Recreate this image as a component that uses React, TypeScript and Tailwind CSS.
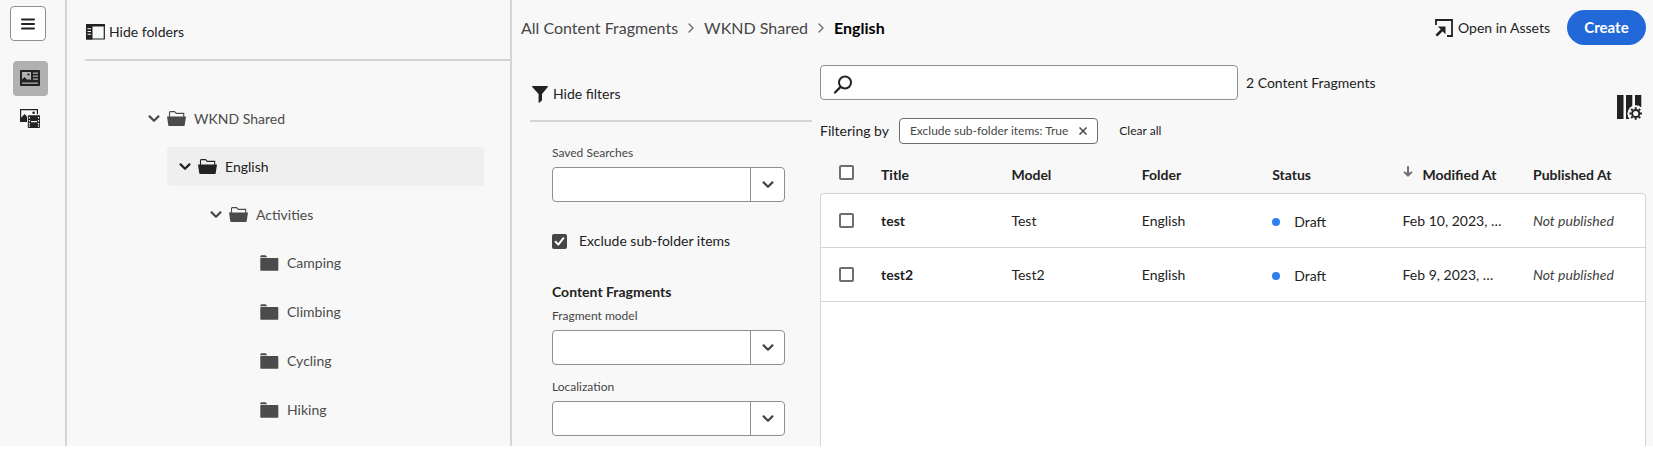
import type { ReactNode } from "react";

type IconProps = { className?: string };

function ChevronDown({ className = "" }: IconProps) {
  return (
    <svg className={className} width="12" height="8" viewBox="0 0 12 8" fill="none" aria-hidden="true">
      <path d="M1.6 1.4 6 5.800l4.400-4.400" stroke="currentColor" strokeWidth="2.200" strokeLinecap="round" strokeLinejoin="round" />
    </svg>
  );
}

function ChevronRight() {
  return (
    <svg className="text-[#6e6e6e]" width="6" height="10" viewBox="0 0 6 10" fill="none" aria-hidden="true">
      <path d="M1 1l4 4-4 4" stroke="currentColor" strokeWidth="1.400" strokeLinecap="round" strokeLinejoin="round" />
    </svg>
  );
}

function MenuIcon() {
  return (
    <svg width="14" height="12" viewBox="0 0 14 12" fill="none" aria-hidden="true">
      <path d="M1 1.500h12M1 6h12M1 10.500h12" stroke="currentColor" strokeWidth="2" strokeLinecap="round" />
    </svg>
  );
}

function FragmentIcon() {
  return (
    <svg width="20" height="16" viewBox="0 0 20 16" aria-hidden="true">
      <rect width="20" height="16" rx="0.800" fill="currentColor" />
      <path d="M2 2h9v9H2z" fill="#b1b1b1" />
      <rect x="7.400" y="3.600" width="2" height="2" rx="0.500" fill="currentColor" />
      <path d="M2 9.600 4.600 7l3 3 1.400-1 2 1.400V11H2z" fill="currentColor" />
      <path d="M13 2.600h5v1.200h-5zM13 5.600h5v1.200h-5zM13 8.600h5v1.200h-5zM2 12.600h16v1.200H2z" fill="#b1b1b1" />
    </svg>
  );
}

function AssetsIcon() {
  return (
    <svg width="20" height="19" viewBox="0 0 20 19" aria-hidden="true">
      <path d="M.600 12.500V.700h16.800v4.600" fill="none" stroke="currentColor" strokeWidth="1.200" />
      <path d="M0 13V10l4.500-5L7 7.500V13z" fill="currentColor" />
      <circle cx="13.600" cy="3.800" r="1.300" fill="currentColor" />
      <rect x="7.800" y="6.300" width="12.200" height="12.700" rx="0.800" fill="currentColor" />
      <path
        d="M11 12h6v1.200h-6zM8.800 8h1.200v1.500H8.800zM8.800 11h1.200v1.500H8.800zM8.800 14h1.200v1.500H8.800zM8.800 16.600h1.200v1.200H8.800zM17.900 8h1.200v1.500h-1.200zM17.900 11h1.200v1.500h-1.200zM17.900 14h1.200v1.500h-1.200zM17.900 16.600h1.200v1.200h-1.200z"
        fill="#f8f8f8"
      />
    </svg>
  );
}

function PanelIcon() {
  return (
    <svg width="19" height="16" viewBox="0 0 19 16" aria-hidden="true">
      <path d="M.700.700h17.600v14.300H.700z" fill="none" stroke="currentColor" strokeWidth="1.200" />
      <path d="M0 0h19v2.400H0zM0 2h6.500v13.500H0z" fill="currentColor" />
      <path d="M1.500 4.200h3.500v1H1.500zM1.500 7h3.500v1H1.500zM1.500 9.800h3.500v1H1.500z" fill="#f8f8f8" />
    </svg>
  );
}

function FolderOpen() {
  return (
    <svg width="19" height="16" viewBox="0 0 19 16" aria-hidden="true">
      <path d="M2.500 6V1.300L3.200.600h4.300L9.300 2.400h7.400V6" fill="none" stroke="currentColor" strokeWidth="1.100" />
      <path d="M0 5.600h19l-1.300 8.600a.8.8 0 0 1-.8.700H2.100a.8.8 0 0 1-.8-.7z" fill="currentColor" />
    </svg>
  );
}

function FolderClosed() {
  return (
    <svg width="19" height="16" viewBox="0 0 19 16" aria-hidden="true">
      <path d="M.3 2.200V1.200L1 .300h4.600l1.800 1.900z" fill="currentColor" />
      <rect x="0.300" y="3.100" width="18" height="12.600" rx="0.600" fill="currentColor" />
    </svg>
  );
}

function FilterIcon() {
  return (
    <svg width="16" height="17" viewBox="0 0 16 17" aria-hidden="true">
      <path d="M.6 0h14.800c.5 0 .7.500.4.900L10 8v6.200l-2.600 2.500c-.3.300-.8.100-.8-.3V8L.2.900C-.1.500.1 0 .6 0z" fill="currentColor" />
    </svg>
  );
}

function SearchIcon({ className = "" }: IconProps) {
  return (
    <svg className={className} width="20" height="20" viewBox="0 0 20 20" fill="none" aria-hidden="true">
      <circle cx="12" cy="7.500" r="6" stroke="currentColor" strokeWidth="2" />
      <path d="M7.600 11.900 2 17.500" stroke="currentColor" strokeWidth="2.200" strokeLinecap="round" />
    </svg>
  );
}

function OpenIcon() {
  return (
    <svg width="18" height="18" viewBox="0 0 18 18" aria-hidden="true">
      <path d="M1 6V1h16v16h-5" fill="none" stroke="currentColor" strokeWidth="1.800" />
      <path d="M1.400 16.600 8 10" fill="none" stroke="currentColor" strokeWidth="2.600" />
      <path d="M2.800 7.500h7.700v7.700z" fill="currentColor" />
    </svg>
  );
}

function ColumnsIcon() {
  return (
    <svg width="26" height="26" viewBox="0 0 26 26" aria-hidden="true">
      <path d="M0 0h6.500v24H0zM9 0h6.300v24H9zM18 0h6.300v12H18z" fill="currentColor" />
      <circle cx="18.700" cy="18.500" r="8.300" fill="#f8f8f8" />
      <circle cx="18.700" cy="18.500" r="3.600" fill="none" stroke="currentColor" strokeWidth="2" />
      <path
        d="M18.700 12.200v2M18.700 22.800v2M12.400 18.500h2M23 18.500h2M14.200 14l1.400 1.400M21.800 21.600l1.400 1.400M14.200 23l1.400-1.400M21.800 15.400l1.400-1.400"
        stroke="currentColor"
        strokeWidth="2"
      />
      <path d="M9 20.500h1l1 3.500H9z" fill="currentColor" />
    </svg>
  );
}

function SortDown() {
  return (
    <svg className="text-[#6e6e6e]" width="10" height="12" viewBox="0 0 10 12" fill="none" aria-hidden="true">
      <path d="M5 1v8" stroke="currentColor" strokeWidth="2" strokeLinecap="round" />
      <path d="M1.200 6.200 5 10l3.800-3.800L5 8z" fill="currentColor" stroke="currentColor" strokeWidth="1.300" strokeLinejoin="round" />
    </svg>
  );
}

function CloseIcon() {
  return (
    <svg width="8" height="8" viewBox="0 0 8 8" aria-hidden="true">
      <path d="M.5.500l7 7M7.500.500l-7 7" stroke="currentColor" strokeWidth="1.500" />
    </svg>
  );
}

type Folder = { name: string; children?: Folder[]; selected?: boolean };

const folders: Folder = {
  name: "WKND Shared",
  children: [
    {
      name: "English",
      selected: true,
      children: [
        {
          name: "Activities",
          children: [{ name: "Camping" }, { name: "Climbing" }, { name: "Cycling" }, { name: "Hiking" }],
        },
      ],
    },
  ],
};

function FolderNode({ folder }: { folder: Folder }) {
  const tone = folder.selected ? "bg-[#efefef] text-[#222222]" : "text-[#4b4b4b]";
  return (
    <li>
      <button type="button" className={`flex h-[39px] w-full items-center rounded pl-3 text-left text-sm ${tone}`}>
        <span className="flex w-[19px] shrink-0">{folder.children && <ChevronDown />}</span>
        <span className="mr-2 shrink-0">{folder.children ? <FolderOpen /> : <FolderClosed />}</span>
        <span className="whitespace-nowrap">{folder.name}</span>
      </button>
      {folder.children && (
        <ul className="mt-[9px] flex flex-col gap-2.5 pl-[31px]">
          {folder.children.map((child) => (
            <FolderNode key={child.name} folder={child} />
          ))}
        </ul>
      )}
    </li>
  );
}

function Checkbox({ label, defaultChecked = false, children }: { label?: string; defaultChecked?: boolean; children?: ReactNode }) {
  return (
    <label className="inline-flex items-center gap-3 text-sm">
      <span className="relative block size-[15px]">
        <input
          type="checkbox"
          aria-label={label}
          defaultChecked={defaultChecked}
          className="peer block size-[15px] appearance-none rounded-xs border-2 border-[#6e6e6e] bg-white checked:border-[#464646] checked:bg-[#464646]"
        />
        <svg className="pointer-events-none absolute inset-0 hidden peer-checked:block" width="15" height="15" viewBox="0 0 15 15" fill="none" aria-hidden="true">
          <path d="M3.600 7.800 6.300 10.600 11.400 4.200" stroke="#ffffff" strokeWidth="2" strokeLinecap="round" strokeLinejoin="round" />
        </svg>
      </span>
      {children}
    </label>
  );
}

function Picker({ id, label }: { id: string; label: string }) {
  return (
    <div className="flex flex-col gap-1.5">
      <label htmlFor={id} className="text-xs text-[#464646]">
        {label}
      </label>
      <div className="relative">
        <select id={id} className="block h-[35px] w-full appearance-none rounded border border-[#8f8f8f] bg-white px-3 text-sm">
          <option value="" />
        </select>
        <span className="pointer-events-none absolute inset-y-0 right-0 flex w-[35px] items-center justify-center border-l border-[#8f8f8f] text-[#464646]">
          <ChevronDown />
        </span>
      </div>
    </div>
  );
}

const rows = [
  { title: "test", model: "Test", folder: "English", status: "Draft", modified: "Feb 10, 2023, …", published: "Not published" },
  { title: "test2", model: "Test2", folder: "English", status: "Draft", modified: "Feb 9, 2023, …", published: "Not published" },
];

function FragmentTable() {
  return (
    <table className="w-full table-fixed border-separate border-spacing-0 text-left text-sm">
      <colgroup>
        <col className="w-[61px]" />
        <col />
        <col />
        <col />
        <col />
        <col />
        <col className="w-[113px]" />
      </colgroup>
      <thead>
        <tr className="h-[49px] align-bottom font-bold">
          <th className="pb-[13px] pl-[19px]">
            <span className="flex">
              <Checkbox label="Select all" />
            </span>
          </th>
          <th className="pb-2">Title</th>
          <th className="pb-2">Model</th>
          <th className="pb-2">Folder</th>
          <th className="pb-2">Status</th>
          <th className="pb-2">
            <span className="flex gap-2.5">
              <span className="pt-px">
                <SortDown />
              </span>
              Modified At
            </span>
          </th>
          <th className="pb-2">Published At</th>
        </tr>
      </thead>
      <tbody>
        {rows.map((row) => (
          <tr
            key={row.title}
            className="group h-[54px] bg-white *:border-b *:border-[#d5d5d5] first:*:border-t first:h-[55px]"
          >
            <td className="border-l pl-[18px] group-first:rounded-tl">
              <span className="flex">
                <Checkbox label={`Select ${row.title}`} />
              </span>
            </td>
            <td className="font-bold">{row.title}</td>
            <td>{row.model}</td>
            <td>{row.folder}</td>
            <td>
              <span className="flex items-center gap-3.5 pt-0.5">
                <span className="size-2 rounded-full bg-[#2f80ed]" />
                {row.status}
              </span>
            </td>
            <td className="whitespace-nowrap">{row.modified}</td>
            <td className="border-r text-[#3f3f3f] italic group-first:rounded-tr">{row.published}</td>
          </tr>
        ))}
      </tbody>
    </table>
  );
}

export default function App() {
  return (
    <div className="flex h-screen min-w-[1200px] bg-white pb-[5px] font-['Lato','Noto_Sans',sans-serif] text-[#222222]">
      <nav aria-label="Main" className="flex w-[67px] shrink-0 flex-col border-r-2 border-[#d5d5d5] bg-[#f8f8f8] pt-1.5">
        <button type="button" aria-label="Menu" className="ml-2.5 flex h-[35px] w-9 items-center justify-center rounded border border-[#8f8f8f] bg-white">
          <MenuIcon />
        </button>
        <a href="#fragments" aria-label="Content Fragments" className="mt-5 ml-[13px] flex h-[35px] w-[35px] items-center rounded bg-[#b1b1b1] pb-px pl-[7px]">
          <FragmentIcon />
        </a>
        <a href="#assets" aria-label="Assets" className="mt-[5px] ml-[13px] flex h-[35px] w-[35px] items-center pl-[7px]">
          <AssetsIcon />
        </a>
      </nav>

      <aside className="w-[445px] shrink-0 overflow-hidden border-r-2 border-[#d5d5d5] bg-[#f8f8f8] pl-[18px]">
        <div className="flex h-[61px] items-end border-b-2 border-[#d5d5d5] pb-[17px]">
          <button type="button" className="flex items-center gap-1 pl-px text-sm">
            <PanelIcon />
            Hide folders
          </button>
        </div>
        <ul className="pt-[38px] pr-[26px] pl-[51px]">
          <FolderNode folder={folders} />
        </ul>
      </aside>

      <div className="flex min-w-0 flex-1 flex-col overflow-hidden bg-[#f8f8f8]">
        <header className="flex h-[55px] shrink-0 items-center justify-between pr-[7px] pl-[9px]">
          <nav aria-label="Breadcrumb" className="flex items-center gap-2.5 text-base text-[#464646]">
            <a href="#all">All Content Fragments</a>
            <ChevronRight />
            <a href="#shared">WKND Shared</a>
            <ChevronRight />
            <span className="font-bold text-black">English</span>
          </nav>
          <div className="flex items-center gap-[17px]">
            <a href="#open" className="flex items-center gap-[5px] text-sm">
              <OpenIcon />
              Open in Assets
            </a>
            <button type="button" className="h-[35px] w-[79px] rounded-full bg-[#2268d9] text-[15px] font-bold text-white">
              Create
            </button>
          </div>
        </header>

        <div className="flex min-h-0 flex-1">
          <section aria-label="Filters" className="w-[300px] shrink-0 pl-[18px]">
            <div className="flex h-[67px] items-end border-b-2 border-[#d5d5d5] pb-4 pl-0.5">
              <button type="button" className="flex items-center gap-[5px] text-sm">
                <FilterIcon />
                Hide filters
              </button>
            </div>
            <div className="flex flex-col pt-[23px] pr-[27px] pl-[22px]">
              <Picker id="saved" label="Saved Searches" />
              <div className="mt-[29px] flex">
                <Checkbox defaultChecked>Exclude sub-folder items</Checkbox>
              </div>
              <h2 className="mt-[31px] mb-1.5 text-sm font-bold">Content Fragments</h2>
              <div className="flex flex-col gap-3.5">
                <Picker id="model" label="Fragment model" />
                <Picker id="localization" label="Localization" />
              </div>
            </div>
          </section>

          <main className="flex min-w-0 flex-1 flex-col pt-2.5 pr-[7px] pl-2">
            <div className="flex items-start justify-between">
              <div className="flex flex-1 flex-col gap-[18px]">
                <div className="flex items-center gap-2">
                  <div className="relative w-[418px]">
                    <input
                      type="search"
                      aria-label="Search"
                      className="block h-[35px] w-full rounded border border-[#8f8f8f] bg-white pr-3 pl-11 text-sm"
                    />
                    <SearchIcon className="pointer-events-none absolute top-2.5 left-[13px]" />
                  </div>
                  <span className="text-sm">2 Content Fragments</span>
                </div>
                <div className="flex items-center text-sm">
                  <span>Filtering by</span>
                  <span className="ml-2.5 flex h-[26px] items-center gap-[11px] rounded border border-[#6e6e6e] bg-white px-2.5 text-xs text-[#464646]">
                    Exclude sub-folder items: True
                    <button type="button" aria-label="Remove filter">
                      <CloseIcon />
                    </button>
                  </span>
                  <button type="button" className="ml-[21px] text-xs">
                    Clear all
                  </button>
                </div>
              </div>
              <button type="button" aria-label="Customize columns" className="mt-[30px] mr-[3px]">
                <ColumnsIcon />
              </button>
            </div>
            <FragmentTable />
            <div className="flex-1 border-x border-[#d5d5d5] bg-white" />
          </main>
        </div>
      </div>
    </div>
  );
}
